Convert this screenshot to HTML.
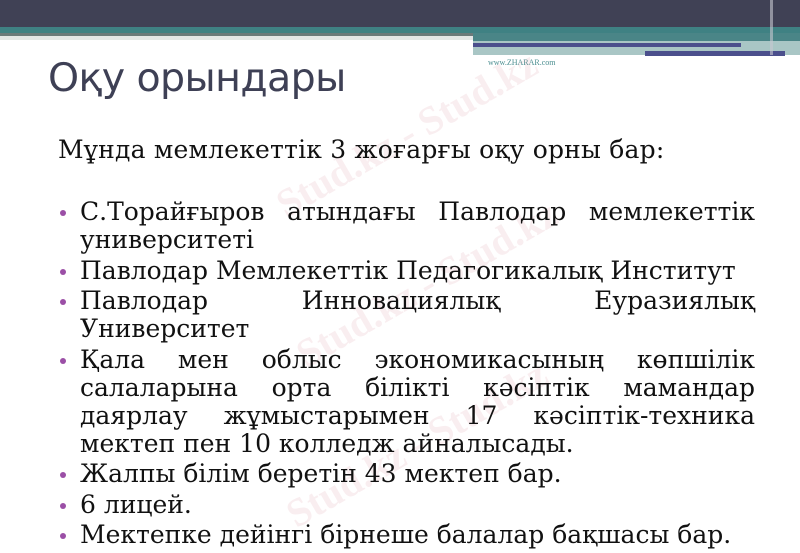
<!DOCTYPE html>
<html><head><meta charset="utf-8"><style>
body{margin:0;width:800px;height:553px;overflow:hidden;background:#fff;position:relative;font-family:"DejaVu Serif","Liberation Serif",serif}
.b{position:absolute}
h1{position:absolute;left:48px;top:55px;margin:0;font:400 39.5px "DejaVu Sans","Liberation Sans",sans-serif;color:#3e4055;letter-spacing:-0.6px}
.intro{position:absolute;left:58px;top:135px;font-size:25px;color:#111;white-space:nowrap;letter-spacing:0.2px}
ul{position:absolute;left:58px;top:198px;width:697px;margin:0;padding:0;list-style:none;font-size:25px;line-height:28px;color:#111}
li{position:relative;padding-left:22px;margin-bottom:2.5px}
li div{white-space:nowrap}
li div.j{text-align:justify;text-align-last:justify;white-space:normal}
li:before{content:"";position:absolute;left:2px;top:12px;width:6px;height:6px;border-radius:50%;background:#9b4fa6}
.wm{position:absolute;font:bold 40px "Liberation Serif",serif;color:rgba(220,150,160,.16);transform:rotate(-30deg)}
</style></head><body>
<div class="b" style="left:0;top:0;width:800px;height:27px;background:#404155"></div>
<div class="b" style="left:0;top:27px;width:800px;height:6px;background:#3f8183"></div>
<div class="b" style="left:0;top:33px;width:473px;height:3px;background:#6b7a7a"></div>
<div class="b" style="left:0;top:36px;width:473px;height:4px;background:#e3e6e6"></div>
<div class="b" style="left:473px;top:33px;width:327px;height:8px;background:#4a8587"></div>
<div class="b" style="left:473px;top:41px;width:327px;height:14px;background:#a9c6c5"></div>
<div class="b" style="left:473px;top:43px;width:268px;height:4px;background:#4b4f8c"></div>
<div class="b" style="left:645px;top:51px;width:140px;height:5px;background:#4b4f8c"></div>
<div class="b" style="left:770px;top:0;width:3px;height:55px;background:#c8c8d0;opacity:.6"></div>
<div class="b" style="left:488px;top:58px;font:8px 'Liberation Serif',serif;color:#4b8e90">www.ZHARAR.com</div>
<div class="wm" style="left:260px;top:110px">Stud.kz - Stud.kz</div>
<div class="wm" style="left:280px;top:260px">Stud.kz - Stud.kz</div>
<div class="wm" style="left:270px;top:420px">Stud.kz - Stud.kz</div>
<h1>Оқу орындары</h1>
<div class="intro">Мұнда мемлекеттік 3 жоғарғы оқу орны бар:</div>
<ul>
<li><div class="j">С.Торайғыров атындағы Павлодар мемлекеттік</div><div>университеті</div></li>
<li><div>Павлодар Мемлекеттік Педагогикалық Институт</div></li>
<li><div class="j">Павлодар Инновациялық Еуразиялық</div><div>Университет</div></li>
<li><div class="j">Қала мен облыс экономикасының көпшілік</div><div class="j">салаларына орта білікті кәсіптік мамандар</div><div class="j">даярлау жұмыстарымен 17 кәсіптік-техника</div><div>мектеп пен 10 колледж айналысады.</div></li>
<li><div>Жалпы білім беретін 43 мектеп бар.</div></li>
<li><div>6 лицей.</div></li>
<li><div>Мектепке дейінгі бірнеше балалар бақшасы бар.</div></li>
</ul>
</body></html>
